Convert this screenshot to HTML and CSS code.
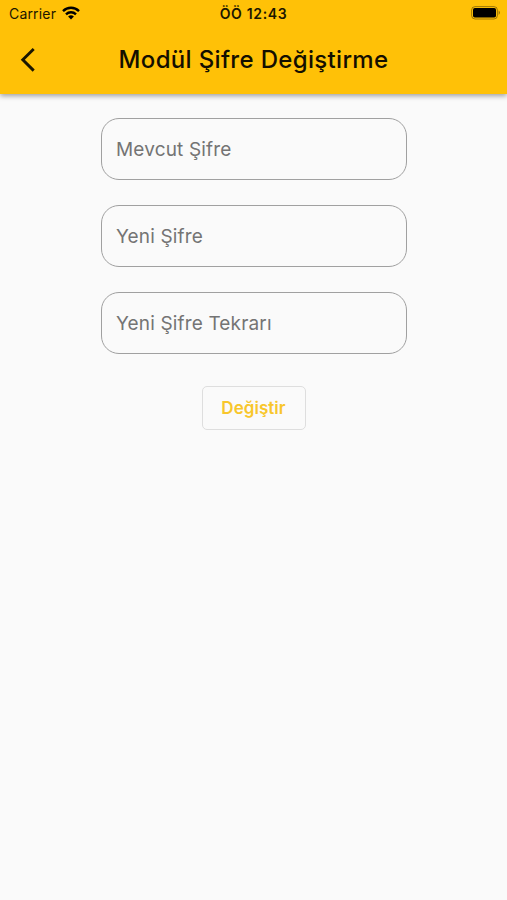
FILE: index.html
```html
<!DOCTYPE html>
<html lang="tr">
<head>
<meta charset="utf-8">
<title>Modül Şifre Değiştirme</title>
<link rel="stylesheet" href="styles.css">
</head>
<body>
<header class="top">
  <div class="status">
    <div class="carrier"><span class="carrier-name">Carrier</span>
      <svg class="wifi" width="18" height="14" viewBox="0 0 18 14" fill="none" stroke="#000" stroke-width="2.4"><path d="M1 5.1C5.500 .7 12.500 .7 17 5.100M4 8.300C6.800 5.600 11.200 5.600 14 8.300"/><path d="M9 13.400L6.100 10.500Q9 8.100 11.900 10.500Z" fill="#000" stroke="none"/></svg>
    </div>
    <div class="time"><span>ÖÖ 12:43</span></div>
    <div class="power"><svg width="30" height="14" viewBox="0 0 30 14"><rect x=".6" y=".6" width="25.800" height="12.400" rx="3.500" fill="none" stroke="#000" stroke-opacity=".38"/><rect x="2" y="2" width="23" height="9.600" rx="1.800"/><path d="M27.600 4.600Q30.400 6.800 27.600 9Z" fill-opacity=".4"/></svg></div>
  </div>
  <div class="bar">
    <svg class="back" width="16" height="26" viewBox="0 0 16 26" fill="none" stroke="#1b1600" stroke-width="2.900"><path d="M13.700 2L2.800 12.800L13.700 23.600"/></svg>
    <h1><span>Modül Şifre Değiştirme</span></h1>
  </div>
</header>
<main class="form">
  <div class="field"><span>Mevcut Şifre</span></div>
  <div class="field"><span>Yeni Şifre</span></div>
  <div class="field"><span>Yeni Şifre Tekrarı</span></div>
  <button class="submit"><span>Değiştir</span></button>
</main>
</body>
</html>
```
FILE: styles.css
```css
* { box-sizing: border-box; }
body { margin: 0; height: 900px; background: #fafafa; font-family: Inter, sans-serif; overflow: hidden; }
.top { height: 94px; background: #ffc107; box-shadow: 0 2px 5px rgba(0,0,0,.36); }
.status { height: 27px; display: grid; grid-template-columns: 1fr 1fr 1fr; align-items: center; font-size: 14px; color: #1b1600; }
.carrier { display: flex; align-items: center; gap: 6px; padding-left: 9px; letter-spacing: .18px; }
.wifi, .power svg { margin-top: -1px; }
.time { text-align: center; font-weight: 600; letter-spacing: .65px; }
.power { display: flex; justify-content: flex-end; padding-right: 6px; }
.bar { height: 65px; display: grid; grid-template-columns: 60px 1fr 60px; align-items: center; }
.back { margin-left: 20px; }
h1 { margin: 0; font-size: 24px; font-weight: 500; letter-spacing: .33px; text-align: center; white-space: nowrap; color: #140f00; }
.form { display: flex; flex-direction: column; align-items: center; padding-top: 24px; }
.field { width: 306px; height: 62px; margin-bottom: 25px; padding-left: 14.5px; border: 1px solid #a0a0a0; border-radius: 18px; display: flex; align-items: center; font-size: 19px; letter-spacing: .15px; color: #747474; }
.submit { width: 104px; height: 44px; margin-top: 7px; padding: 0; border: 1px solid #dedede; border-radius: 5px; background: transparent; font: 600 17px Inter, sans-serif; color: #f8c62b; letter-spacing: .05px; }
```
